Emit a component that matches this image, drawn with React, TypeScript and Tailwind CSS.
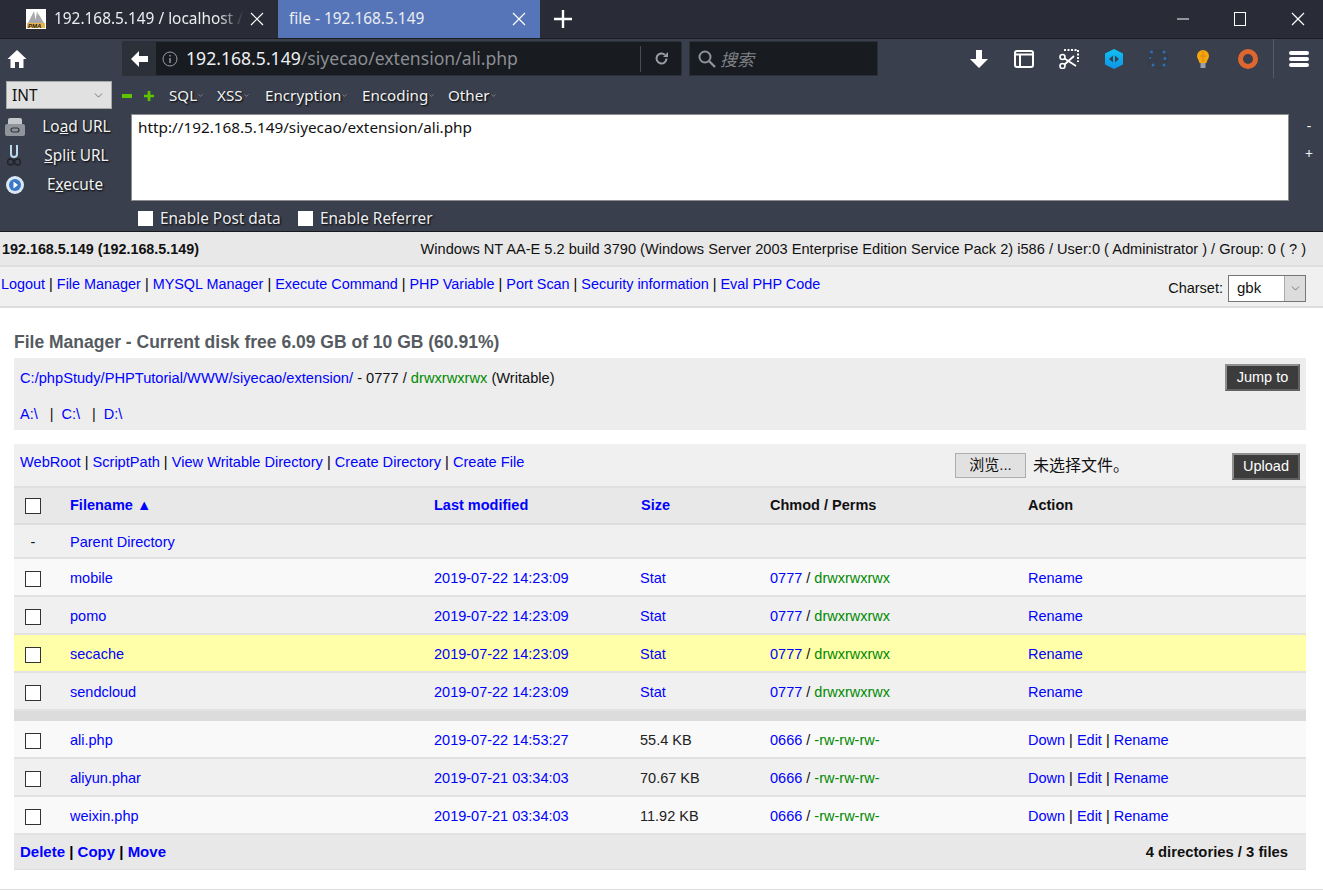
import React from "react";
import { ChevronDown } from "lucide-react";

const chromeFont = "font-['Noto_Sans','Noto_Sans_CJK_SC',sans-serif]";
const shadow = "[text-shadow:1px_1px_2px_#000]";

type Row = {
  name: string;
  modified: string;
  size: string;
  perm: string;
  mode: string;
  actions: string[];
  bg: string;
};

const dirRows: Row[] = [
  { name: "mobile", modified: "2019-07-22 14:23:09", size: "Stat", perm: "0777", mode: "drwxrwxrwx", actions: ["Rename"], bg: "bg-[#f9f9f9]" },
  { name: "pomo", modified: "2019-07-22 14:23:09", size: "Stat", perm: "0777", mode: "drwxrwxrwx", actions: ["Rename"], bg: "bg-[#f0f0f0]" },
  { name: "secache", modified: "2019-07-22 14:23:09", size: "Stat", perm: "0777", mode: "drwxrwxrwx", actions: ["Rename"], bg: "bg-[#ffffaa]" },
  { name: "sendcloud", modified: "2019-07-22 14:23:09", size: "Stat", perm: "0777", mode: "drwxrwxrwx", actions: ["Rename"], bg: "bg-[#f0f0f0]" },
];

const fileRows: Row[] = [
  { name: "ali.php", modified: "2019-07-22 14:53:27", size: "55.4 KB", perm: "0666", mode: "-rw-rw-rw-", actions: ["Down", "Edit", "Rename"], bg: "bg-[#f9f9f9]" },
  { name: "aliyun.phar", modified: "2019-07-21 03:34:03", size: "70.67 KB", perm: "0666", mode: "-rw-rw-rw-", actions: ["Down", "Edit", "Rename"], bg: "bg-[#f0f0f0]" },
  { name: "weixin.php", modified: "2019-07-21 03:34:03", size: "11.92 KB", perm: "0666", mode: "-rw-rw-rw-", actions: ["Down", "Edit", "Rename"], bg: "bg-[#f9f9f9]" },
];

const cols = "grid grid-cols-[56px_364px_206px_130px_258px_1fr] items-center";

const Sep = () => <span className="text-black"> | </span>;

const LinkList = ({ items }: { items: string[] }) => (
  <span>
    {items.map((item, i) => (
      <React.Fragment key={item}>
        {i > 0 && <Sep />}
        <a className="text-[#0000ff]">{item}</a>
      </React.Fragment>
    ))}
  </span>
);

const Box = () => <span className="block w-4 h-4 mx-auto border border-[#333] bg-white" />;

const FileRow = ({ row }: { row: Row }) => (
  <div className={`${cols} h-[38px] pt-[4px] border-b-2 border-[#e2e2e2] ${row.bg}`}>
    <div className="w-[38px]"><Box /></div>
    <a className="text-[#0000ff]">{row.name}</a>
    <a className="text-[#0000ff]">{row.modified}</a>
    {row.size === "Stat" ? <a className="text-[#0000ff]">Stat</a> : <span className="text-[#222]">{row.size}</span>}
    <span>
      <a className="text-[#0000ff]">{row.perm}</a> / <span className="text-[#008a00]">{row.mode}</span>
    </span>
    <LinkList items={row.actions} />
  </div>
);

const PmaIcon = () => (
  <svg width="20" height="20" viewBox="0 0 20 20" className="shrink-0">
    <rect width="20" height="20" fill="#fff" />
    <path d="M2 14 8 2l2 12zM9 14l2-12 3 12zM13 14l-1-10 6 10z" fill="#a8a8ac" />
    <rect x="1" y="14" width="18" height="5" fill="#e9b44c" />
    <text x="2" y="19" fontSize="6" fontWeight="700" fontStyle="italic" fill="#222" fontFamily="Liberation Sans">PMA</text>
  </svg>
);

const X = ({ className = "" }: { className?: string }) => (
  <svg width="14" height="14" viewBox="0 0 14 14" className={className}>
    <path d="M1 1l12 12M13 1 1 13" stroke="currentColor" strokeWidth="1.2" fill="none" />
  </svg>
);

const TabBar = () => (
  <div className={`h-[39px] bg-[#292c37] border-b border-[#1b1d23] flex text-[#eceef2] ${chromeFont}`}>
    <div className="w-[278px] pl-[26px] pr-[14px] flex items-center">
      <PmaIcon />
      <span className="ml-2 text-[15.4px] flex-1 whitespace-nowrap [mask-image:linear-gradient(to_right,#000_86%,transparent)]">
        192.168.5.149 / localhost /
      </span>
      <X className="ml-[6px] text-white" />
    </div>
    <div className="w-[262px] h-[38px] bg-[#5675b9] pl-[11px] pr-[14px] flex items-center justify-between text-[15.4px]">
      <span>file - 192.168.5.149</span>
      <X className="text-white" />
    </div>
    <div className="w-[46px] flex items-center justify-center">
      <svg width="18" height="18" viewBox="0 0 18 18"><path d="M9 0v18M0 9h18" stroke="#fff" strokeWidth="2.4" /></svg>
    </div>
    <div className="ml-auto flex items-center text-white pr-[20px] gap-[45px] pl-0 translate-x-[2px]">
      <svg width="12" height="12" viewBox="0 0 12 12"><path d="M0 6h12" stroke="#fff" strokeWidth="1" /></svg>
      <svg width="12" height="14" viewBox="0 0 12 14"><rect x=".5" y=".5" width="11" height="13" fill="none" stroke="#fff" /></svg>
      <X />
    </div>
  </div>
);

const ToolIcons = () => (
  <div className="flex items-center">
    <div className="w-[45px] flex justify-center">
      <svg width="18" height="18" viewBox="0 0 18 18"><path d="M6 0h6v9h6l-9 9-9-9h6z" fill="#fff" /></svg>
    </div>
    <div className="w-[45px] flex justify-center">
      <svg width="20" height="18" viewBox="0 0 20 18">
        <rect x="1" y="1" width="18" height="16" rx="2" fill="none" stroke="#fff" strokeWidth="2" />
        <path d="M1 4.500h18M6 4.500V17" stroke="#fff" strokeWidth="2" />
      </svg>
    </div>
    <div className="w-[45px] flex justify-center">
      <svg width="20" height="20" viewBox="0 0 20 20">
        <path d="M5 1h14v12" fill="none" stroke="#fff" strokeWidth="2" strokeDasharray="2 1.500" />
        <circle cx="3.500" cy="8" r="2.500" fill="none" stroke="#fff" strokeWidth="1.600" />
        <circle cx="3.500" cy="17" r="2.500" fill="none" stroke="#fff" strokeWidth="1.600" />
        <path d="M5.500 9.500 17 17M5.500 15.500 15 7" stroke="#fff" strokeWidth="1.800" />
      </svg>
    </div>
    <div className="w-[45px] flex justify-center">
      <svg width="18" height="20" viewBox="0 0 18 20">
        <defs>
          <linearGradient id="hex" x1="0" y1="0" x2="0" y2="1">
            <stop offset="0" stopColor="#0fc3f2" />
            <stop offset="1" stopColor="#0e93e6" />
          </linearGradient>
        </defs>
        <path d="M9 0l9 4.500v11L9 20l-9-4.500v-11z" fill="url(#hex)" />
        <path d="M8 6.500v7L4 10zM10 6.500v7l4-3.500z" fill="#33404f" />
      </svg>
    </div>
    <div className="w-[44px] flex justify-center">
      <svg width="20" height="20" viewBox="0 0 20 20">
        <circle cx="10" cy="10" r="9.500" fill="#373e4b" stroke="#333b49" />
        <g fill="#2c6fb8">
          <circle cx="3.500" cy="3" r="1.500" /><circle cx="16" cy="3" r="1.500" /><circle cx="17" cy="9.500" r="1.500" />
          <circle cx="5" cy="16" r="1.500" /><circle cx="16" cy="16" r="1.500" /><circle cx="2" cy="9" r="1" />
        </g>
      </svg>
    </div>
    <div className="w-[45px] flex justify-center">
      <svg width="12" height="18" viewBox="0 0 12 18">
        <path d="M6 0a6 6 0 0 1 6 6c0 2.500-2 4-2.500 7h-7C2 10 0 8.500 0 6a6 6 0 0 1 6-6z" fill="#f5a60f" />
        <path d="M6 1v11M3 6h6" stroke="#d9860a" strokeWidth="1" />
        <rect x="3.500" y="13" width="5" height="5" fill="#9aa0a8" />
      </svg>
    </div>
    <div className="w-[45px] flex justify-center">
      <svg width="20" height="20" viewBox="0 0 20 20">
        <circle cx="10" cy="10" r="7.500" fill="none" stroke="#e0662f" strokeWidth="5" />
      </svg>
    </div>
  </div>
);

const NavBar = () => (
  <div className={`h-[41px] flex items-start pt-[2px] ${chromeFont}`}>
    <div className="w-[122px] h-[35px] pl-[7px] flex items-center">
      <svg width="20" height="18" viewBox="0 0 19 18">
        <path d="M9.500 0 19 9h-3v9h-4.500v-6h-4v6H3V9H0z" fill="#fff" />
      </svg>
    </div>
    <div className="w-[560px] h-[35px] bg-[#181b20] border border-[#2b2f38] rounded-[2px] flex items-center">
      <div className="w-[33px] h-full bg-[#2c3039] flex items-center justify-center">
        <svg width="17" height="16" viewBox="0 0 17 16"><path d="M8 0v5h9v6H8v5L0 8z" fill="#fff" /></svg>
      </div>
      <svg width="16" height="16" viewBox="0 0 16 16" className="ml-[6px]">
        <circle cx="8" cy="8" r="7" fill="none" stroke="#9a9da3" strokeWidth="1" />
        <path d="M8 7v5M8 4v1.600" stroke="#9a9da3" strokeWidth="1.400" />
      </svg>
      <span className="ml-[8px] text-[17.6px] whitespace-nowrap text-[#eef0f2]">
        192.168.5.149<span className="text-[#8b8e94]">/siyecao/extension/ali.php</span>
      </span>
      <div className="ml-auto w-[41px] h-[26px] border-l border-[#4a4d55] flex items-center justify-center">
        <svg width="15" height="15" viewBox="0 0 15 15">
          <path d="M12.500 7.500a5 5 0 1 1-1.600-3.700" fill="none" stroke="#9a9da3" strokeWidth="2" />
          <path d="M14 1v5H9z" fill="#9a9da3" />
        </svg>
      </div>
    </div>
    <div className="ml-[7px] w-[189px] h-[35px] bg-[#181b20] border border-[#2b2f38] flex items-center pl-[8px]">
      <svg width="18" height="18" viewBox="0 0 18 18">
        <circle cx="7" cy="7" r="5.500" fill="none" stroke="#8f9298" strokeWidth="2" />
        <path d="m11 11 6 6" stroke="#8f9298" strokeWidth="2.400" />
      </svg>
      <span className="ml-[4px] italic text-[17px] text-[#7d8085] font-['Noto_Sans_CJK_SC',sans-serif]">搜索</span>
    </div>
    <div className="ml-[79px] h-[35px] flex items-center -translate-x-[1px]"><ToolIcons /></div>
    <div className="ml-[2px] w-px h-[39px] -mt-[2px] bg-[#565a65]" />
    <div className="ml-[16px] h-[35px] flex flex-col justify-center gap-[2px] -translate-x-[1px]">
      <span className="block w-[20px] h-[4px] rounded-full bg-white" />
      <span className="block w-[20px] h-[4px] rounded-full bg-white" />
      <span className="block w-[20px] h-[4px] rounded-full bg-white" />
    </div>
  </div>
);

const HackItem = ({ label, w }: { label: string; w: string }) => (
  <span className={`${w} flex items-center text-[#f1f3f5] text-[15.2px] ${shadow}`}>
    {label}
    <ChevronDown size={7} className="text-[#aaa] mt-[2px]" />
  </span>
);

const SideAction = ({ label, icon, className = "" }: { label: React.ReactNode; icon: React.ReactNode; className?: string }) => (
  <div className="h-[29px] flex items-center">
    <div className="w-[30px] pl-[5px] flex justify-start">{icon}</div>
    <span className={`w-[90px] text-center text-[15.4px] text-[#f1f3f5] ${shadow} ${className}`}>{label}</span>
  </div>
);

const HackBar = () => (
  <div className={`h-[152px] border-b border-[#17191d] ${chromeFont}`}>
    <div className="h-[34px] flex items-start pl-[6px] pt-[1px]">
      <div className="w-[106px] h-[28px] bg-[#e1e1e1] border border-[#a8a8a8] flex items-center justify-between pl-[5px] pr-[6px] text-[15.4px] text-[#111]">
        <span className="pt-px">INT</span>
        <ChevronDown size={13} strokeWidth={1.2} className="text-[#444]" />
      </div>
      <div className="ml-[10px] w-[22px] h-[28px] flex items-center">
        <span className="block w-[10px] h-[4px] mt-[2px] bg-[#5fc400]" />
      </div>
      <div className="w-[25px] h-[28px] flex items-center">
        <svg width="10" height="10" viewBox="0 0 11 11" className="mt-[2px]"><path d="M4 0h3v4h4v3H7v4H4V7H0V4h4z" fill="#5fc400" /></svg>
      </div>
      <div className="h-[28px] flex items-center">
        <HackItem label="SQL" w="w-[48px]" />
        <HackItem label="XSS" w="w-[48px]" />
        <HackItem label="Encryption" w="w-[97px]" />
        <HackItem label="Encoding" w="w-[86px]" />
        <HackItem label="Other" w="w-[60px]" />
      </div>
    </div>
    <div className="flex">
      <div className="w-[131px] shrink-0 -mt-[2px]">
        <SideAction
          className="pl-[3px]"
          label={<>Lo<span className="underline">a</span>d URL</>}
          icon={
            <svg width="20" height="18" viewBox="0 0 20 18">
              <rect x="3" y="0" width="14" height="8" rx="2" fill="#c4c8cc" />
              <rect x="0" y="6" width="20" height="12" rx="2" fill="#8f959b" />
              <rect x="6" y="10" width="8" height="4" rx="2" fill="none" stroke="#30343c" strokeWidth="1.200" />
            </svg>
          }
        />
        <SideAction
          className="pl-[3px]"
          label={<><span className="underline">S</span>plit URL</>}
          icon={
            <svg width="14" height="23" viewBox="0 0 14 23" className="ml-[2px]">
              <path d="M4 1v9a3 3 0 0 0 6 0V1" fill="none" stroke="#b8dcea" strokeWidth="2" />
              <circle cx="3.500" cy="18" r="3" fill="none" stroke="#20242b" strokeWidth="1.500" />
              <circle cx="10.500" cy="18" r="3" fill="none" stroke="#20242b" strokeWidth="1.500" />
            </svg>
          }
        />
        <SideAction
          label={<>E<span className="underline">x</span>ecute</>}
          icon={
            <svg width="18" height="18" viewBox="0 0 18 18" className="ml-px">
              <circle cx="9" cy="9" r="9" fill="#d9e8f5" />
              <circle cx="9" cy="9" r="6" fill="#3a77c4" />
              <path d="M7.500 5.500 12 9l-4.500 3.500z" fill="#fff" />
            </svg>
          }
        />
      </div>
      <div className="w-[1158px] shrink-0">
        <div className="h-[87px] bg-white border border-[#8c8c8c] px-[6px] pt-[1px] text-[15.3px] text-[#111] leading-[22px]">
          http://192.168.5.149/siyecao/extension/ali.php
        </div>
        <div className="h-[30px] flex items-center pl-[7px] pt-[5px] text-[15.4px] text-[#eceef2]">
          <span className="w-[15px] h-[15px] bg-white" />
          <span className={`ml-[7px] w-[138px] ${shadow}`}>Enable Post data</span>
          <span className="w-[15px] h-[15px] bg-white" />
          <span className={`ml-[7px] ${shadow}`}>Enable Referrer</span>
        </div>
      </div>
      <div className="w-[34px] pl-[6px] flex flex-col text-[#f1f3f5] text-[14px] items-center">
        <span className="h-[28px] leading-[24px]">-</span>
        <span className="h-[28px] leading-[24px]">+</span>
      </div>
    </div>
  </div>
);

const DarkButton = ({ children, className = "" }: { children: React.ReactNode; className?: string }) => (
  <span className={`h-[27px] bg-[#3c3c3c] text-white flex items-center justify-center border-2 border-l-[#8f8f8f] border-t-[#8f8f8f] border-b-[#626262] border-r-[#626262] ${className}`}>
    {children}
  </span>
);

const Page = () => (
  <div className="text-[14.5px] text-[#111] font-['Liberation_Sans','Noto_Sans_CJK_SC',sans-serif]">
    <div className="h-[35px] bg-[#e8e8e8] border-b-2 border-[#dedede] flex justify-between pl-[2px] pr-[17px] pt-[7px]">
      <b className="text-[14.35px]">192.168.5.149 (192.168.5.149)</b>
      <span className="text-[14.6px]">Windows NT AA-E 5.2 build 3790 (Windows Server 2003 Enterprise Edition Service Pack 2) i586 / User:0 ( Administrator ) / Group: 0 ( ? )</span>
    </div>
    <div className="h-[41px] bg-[#f0f0f0] border-b-2 border-[#dedede] flex justify-between pl-px pr-[17px] pt-[7px]">
      <span className="text-[14.41px]">
        <LinkList items={["Logout", "File Manager", "MYSQL Manager", "Execute Command", "PHP Variable", "Port Scan", "Security information", "Eval PHP Code"]} />
      </span>
      <div className="flex items-start mt-px">
        <span className="mt-[3px] mr-[5px]">Charset:</span>
        <div className="w-[78px] h-[27px] bg-white border border-[#767676] flex items-center justify-between">
          <span className="pl-[8px] text-[15px]">gbk</span>
          <span className="w-[21px] h-full bg-[#dcdcdc] border-l border-[#aaa] flex items-center justify-center">
            <ChevronDown size={13} strokeWidth={1.2} className="text-[#444]" />
          </span>
        </div>
      </div>
    </div>

    <div className="px-[14px] pr-[17px]">
      <h2 className="mt-[24px] h-[26px] text-[17.5px] font-bold text-[#555b60] leading-[20px]">
        File Manager - Current disk free 6.09 GB of 10 GB (60.91%)
      </h2>

      <div className="h-[72px] bg-[#ededed] px-[6px] pt-[6px] relative">
        <div className="flex justify-between">
          <span className="leading-[28px] text-[14.65px]">
            <a className="text-[#0000ff]">C:/phpStudy/PHPTutorial/WWW/siyecao/extension/</a> - 0777 /{" "}
            <span className="text-[#008a00]">drwxrwxrwx</span> (Writable)
          </span>
          <DarkButton className="w-[75px]">Jump to</DarkButton>
        </div>
        <div className="mt-[8px] leading-[28px]">
          <a className="text-[#0000ff]">A:\</a>
          <span className="pl-[12px] pr-[8px]">|</span>
          <a className="text-[#0000ff]">C:\</a>
          <span className="pl-[12px] pr-[8px]">|</span>
          <a className="text-[#0000ff]">D:\</a>
        </div>
      </div>

      <div className="mt-[14px] h-[44px] bg-[#f0f0f0] border-b-2 border-[#e0e0e0] flex items-start pl-[6px] pr-[6px]">
        <span className="pt-[8px] text-[14.6px]">
          <LinkList items={["WebRoot", "ScriptPath", "View Writable Directory", "Create Directory", "Create File"]} />
        </span>
        <div className="ml-auto flex items-center mt-[9px]">
          <span className="w-[71px] h-[25px] bg-[#e1e1e1] border border-[#adadad] text-[15px] flex items-center justify-center">浏览...</span>
          <span className="ml-[7px] text-[16px]">未选择文件。</span>
        </div>
        <DarkButton className="w-[68px] ml-[103px] mt-[9px]">Upload</DarkButton>
      </div>

      <div className={`${cols} h-[37px] bg-[#e8e8e8] border-b-2 border-[#dedede] font-bold`}>
        <div className="w-[38px]"><Box /></div>
        <a className="text-[#0000ff]">Filename ▲</a>
        <a className="text-[#0000ff]">Last modified</a>
        <a className="text-[#0000ff] pl-px">Size</a>
        <span>Chmod / Perms</span>
        <span>Action</span>
      </div>
      <div className={`${cols} h-[34px] pt-[4px] bg-[#f0f0f0] border-b-2 border-[#e2e2e2]`}>
        <span className="w-[38px] text-center">-</span>
        <a className="text-[#0000ff]">Parent Directory</a>
      </div>
      {dirRows.map((row) => <FileRow key={row.name} row={row} />)}
      <div className="h-[10px] bg-[#dcdcdc]" />
      {fileRows.map((row) => <FileRow key={row.name} row={row} />)}
      <div className="h-[35px] bg-[#e8e8e8] border-b border-[#dedede] flex items-center justify-between pl-[6px] pr-[18px] font-bold text-[15px]">
        <LinkList items={["Delete", "Copy", "Move"]} />
        <span className="text-[14.8px]">4 directories / 3 files</span>
      </div>
    </div>
    <div className="mt-[19px] border-b border-[#dedede]" />
  </div>
);

export default function App() {
  return (
    <div className="w-[1323px] h-[890px] overflow-hidden bg-white">
      <div className="bg-[#393f4c]">
        <TabBar />
        <NavBar />
        <HackBar />
      </div>
      <Page />
    </div>
  );
}
